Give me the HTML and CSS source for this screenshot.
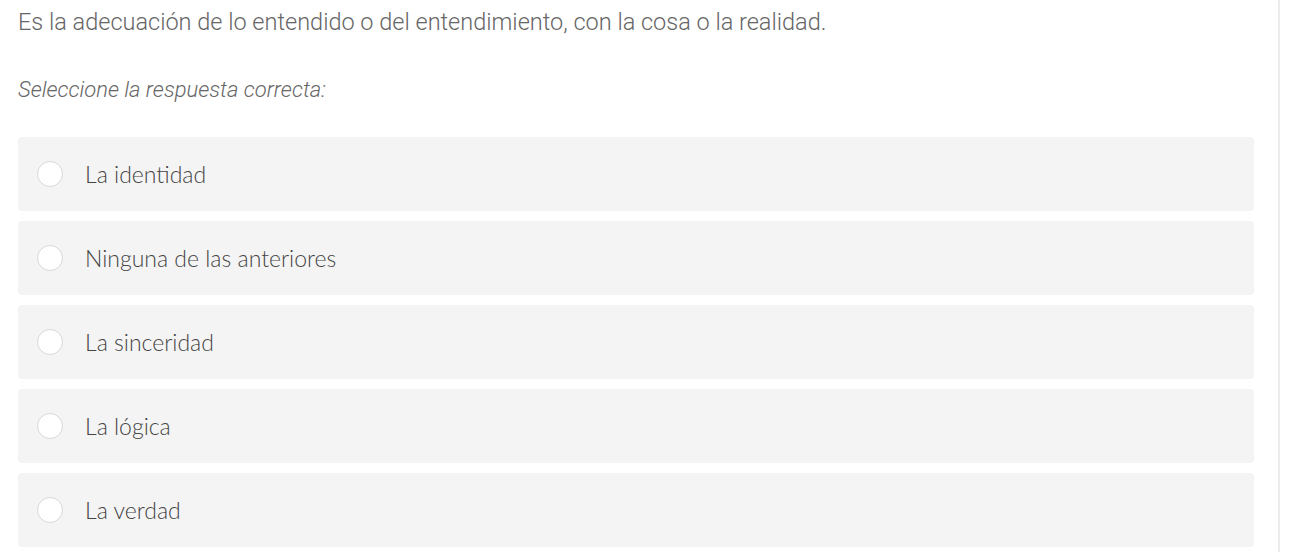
FILE: index.html
```html
<!DOCTYPE html>
<html lang="es">
<head>
<meta charset="UTF-8">
<meta name="viewport" content="width=device-width, initial-scale=1.0">
<title>Pregunta</title>
<link rel="stylesheet" href="styles.css">
</head>
<body>
<div class="page">
    <div class="question">
        <p class="statement">Es la adecuación de lo entendido o del entendimiento, con la cosa o la realidad.</p>
        <p class="hint">Seleccione la respuesta correcta:</p>
        <form class="answers">
            <label class="answer"><input type="radio" name="resp" value="1"><span class="dot"></span>La identidad</label>
            <label class="answer"><input type="radio" name="resp" value="2"><span class="dot"></span>Ninguna de las anteriores</label>
            <label class="answer"><input type="radio" name="resp" value="3"><span class="dot"></span>La sinceridad</label>
            <label class="answer"><input type="radio" name="resp" value="4"><span class="dot"></span>La lógica</label>
            <label class="answer"><input type="radio" name="resp" value="5"><span class="dot"></span>La verdad</label>
        </form>
    </div>
</div>
</body>
</html>
```

FILE: styles.css
```css
body {
    margin: 0;
    padding: 0;
    background-color: #fff;
    font-family: Roboto, "Liberation Sans", sans-serif;
}
.page {
    width: 1280px;
    height: 552px;
    border-right: 2px solid #ececec;
    box-sizing: border-box;
    overflow: hidden;
}
.question {
    width: 1236px;
    padding: 0 0 0 18px;
}
.statement {
    margin: 0;
    padding-top: 7px;
    font-size: 23.5px;
    font-weight: 300;
    color: #666;
    line-height: 30px;
}
.hint {
    margin: 0;
    padding-top: 39px;
    font-size: 22px;
    font-weight: 300;
    font-style: italic;
    color: #666;
    line-height: 28px;
}
.answers {
    margin-top: 33px;
    display: flex;
    flex-direction: column;
    gap: 10px;
}
.answer {
    display: flex;
    align-items: center;
    height: 74px;
    padding-left: 19px;
    background-color: #f4f4f4;
    border-radius: 4px;
    font-family: Lato, "Open Sans", sans-serif;
    font-size: 23px;
    font-weight: 300;
    color: #444;
    cursor: pointer;
}
.answer input {
    display: none;
}
.dot {
    width: 24px;
    height: 24px;
    margin-right: 22px;
    border: 1px solid #d8d8d8;
    border-radius: 50%;
    background-color: #fff;
}
```
